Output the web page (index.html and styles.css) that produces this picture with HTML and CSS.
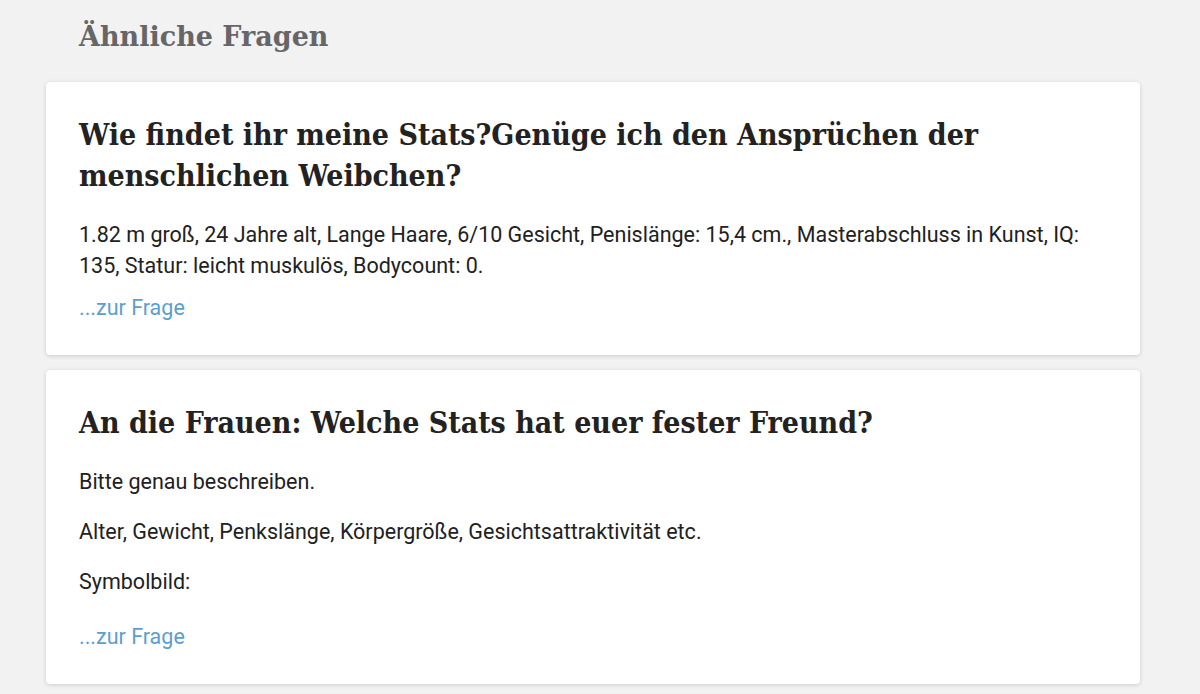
FILE: index.html
```html
<!DOCTYPE html>
<html lang="de">
<head>
    <meta charset="UTF-8">
    <meta name="viewport" content="width=device-width, initial-scale=1.0">
    <title>Ähnliche Fragen</title>
    <link rel="stylesheet" href="styles.css">
</head>
<body>
    <div class="page">
        <h2 class="section-title">Ähnliche Fragen</h2>

        <div class="card">
            <h3 class="card-title">Wie findet ihr meine Stats?Genüge ich den Ansprüchen der menschlichen Weibchen?</h3>
            <p>1.82 m groß, 24 Jahre alt, Lange Haare, 6/10 Gesicht, Penislänge: 15,4 cm., Masterabschluss in Kunst, IQ: 135, Statur: leicht muskulös, Bodycount: 0.</p>
            <a class="more" href="#">...zur Frage</a>
        </div>

        <div class="card">
            <h3 class="card-title">An die Frauen: Welche Stats hat euer fester Freund?</h3>
            <p>Bitte genau beschreiben.</p>
            <p>Alter, Gewicht, Penkslänge, Körpergröße, Gesichtsattraktivität etc.</p>
            <p>Symbolbild:</p>
            <div class="thumb"></div>
            <a class="more" href="#">...zur Frage</a>
        </div>
    </div>
</body>
</html>
```

FILE: styles.css
```css
body {
    margin: 0;
    background: #f2f2f2;
    font-family: Roboto, "Noto Sans", sans-serif;
    color: #212121;
}
.page {
    padding: 0 60px 0 46px;
}
.section-title {
    font-family: "DejaVu Serif", serif;
    font-weight: bold;
    font-size: 27px;
    line-height: 40px;
    color: #666;
    margin: 0;
    padding: 17px 0 25px 33px;
}
.card {
    background: white;
    border-radius: 4px;
    box-shadow: 0 1px 4px rgba(0,0,0,0.16);
    padding: 32px 33px 32px;
    margin-bottom: 15px;
}
.card-title {
    font-family: "DejaVu Serif Condensed", "DejaVu Serif", serif;
    font-weight: bold;
    font-size: 30px;
    line-height: 41px;
    color: #222;
    margin: 0 0 23px;
}
.card p {
    font-size: 21.5px;
    line-height: 31px;
    margin: 0 0 19px;
}
.card p:last-of-type {
    margin-bottom: 11px;
}
.thumb {
    height: 13px;
}
.more {
    display: block;
    font-size: 21.5px;
    line-height: 31px;
    color: #5b9fcf;
    text-decoration: none;
}
```
